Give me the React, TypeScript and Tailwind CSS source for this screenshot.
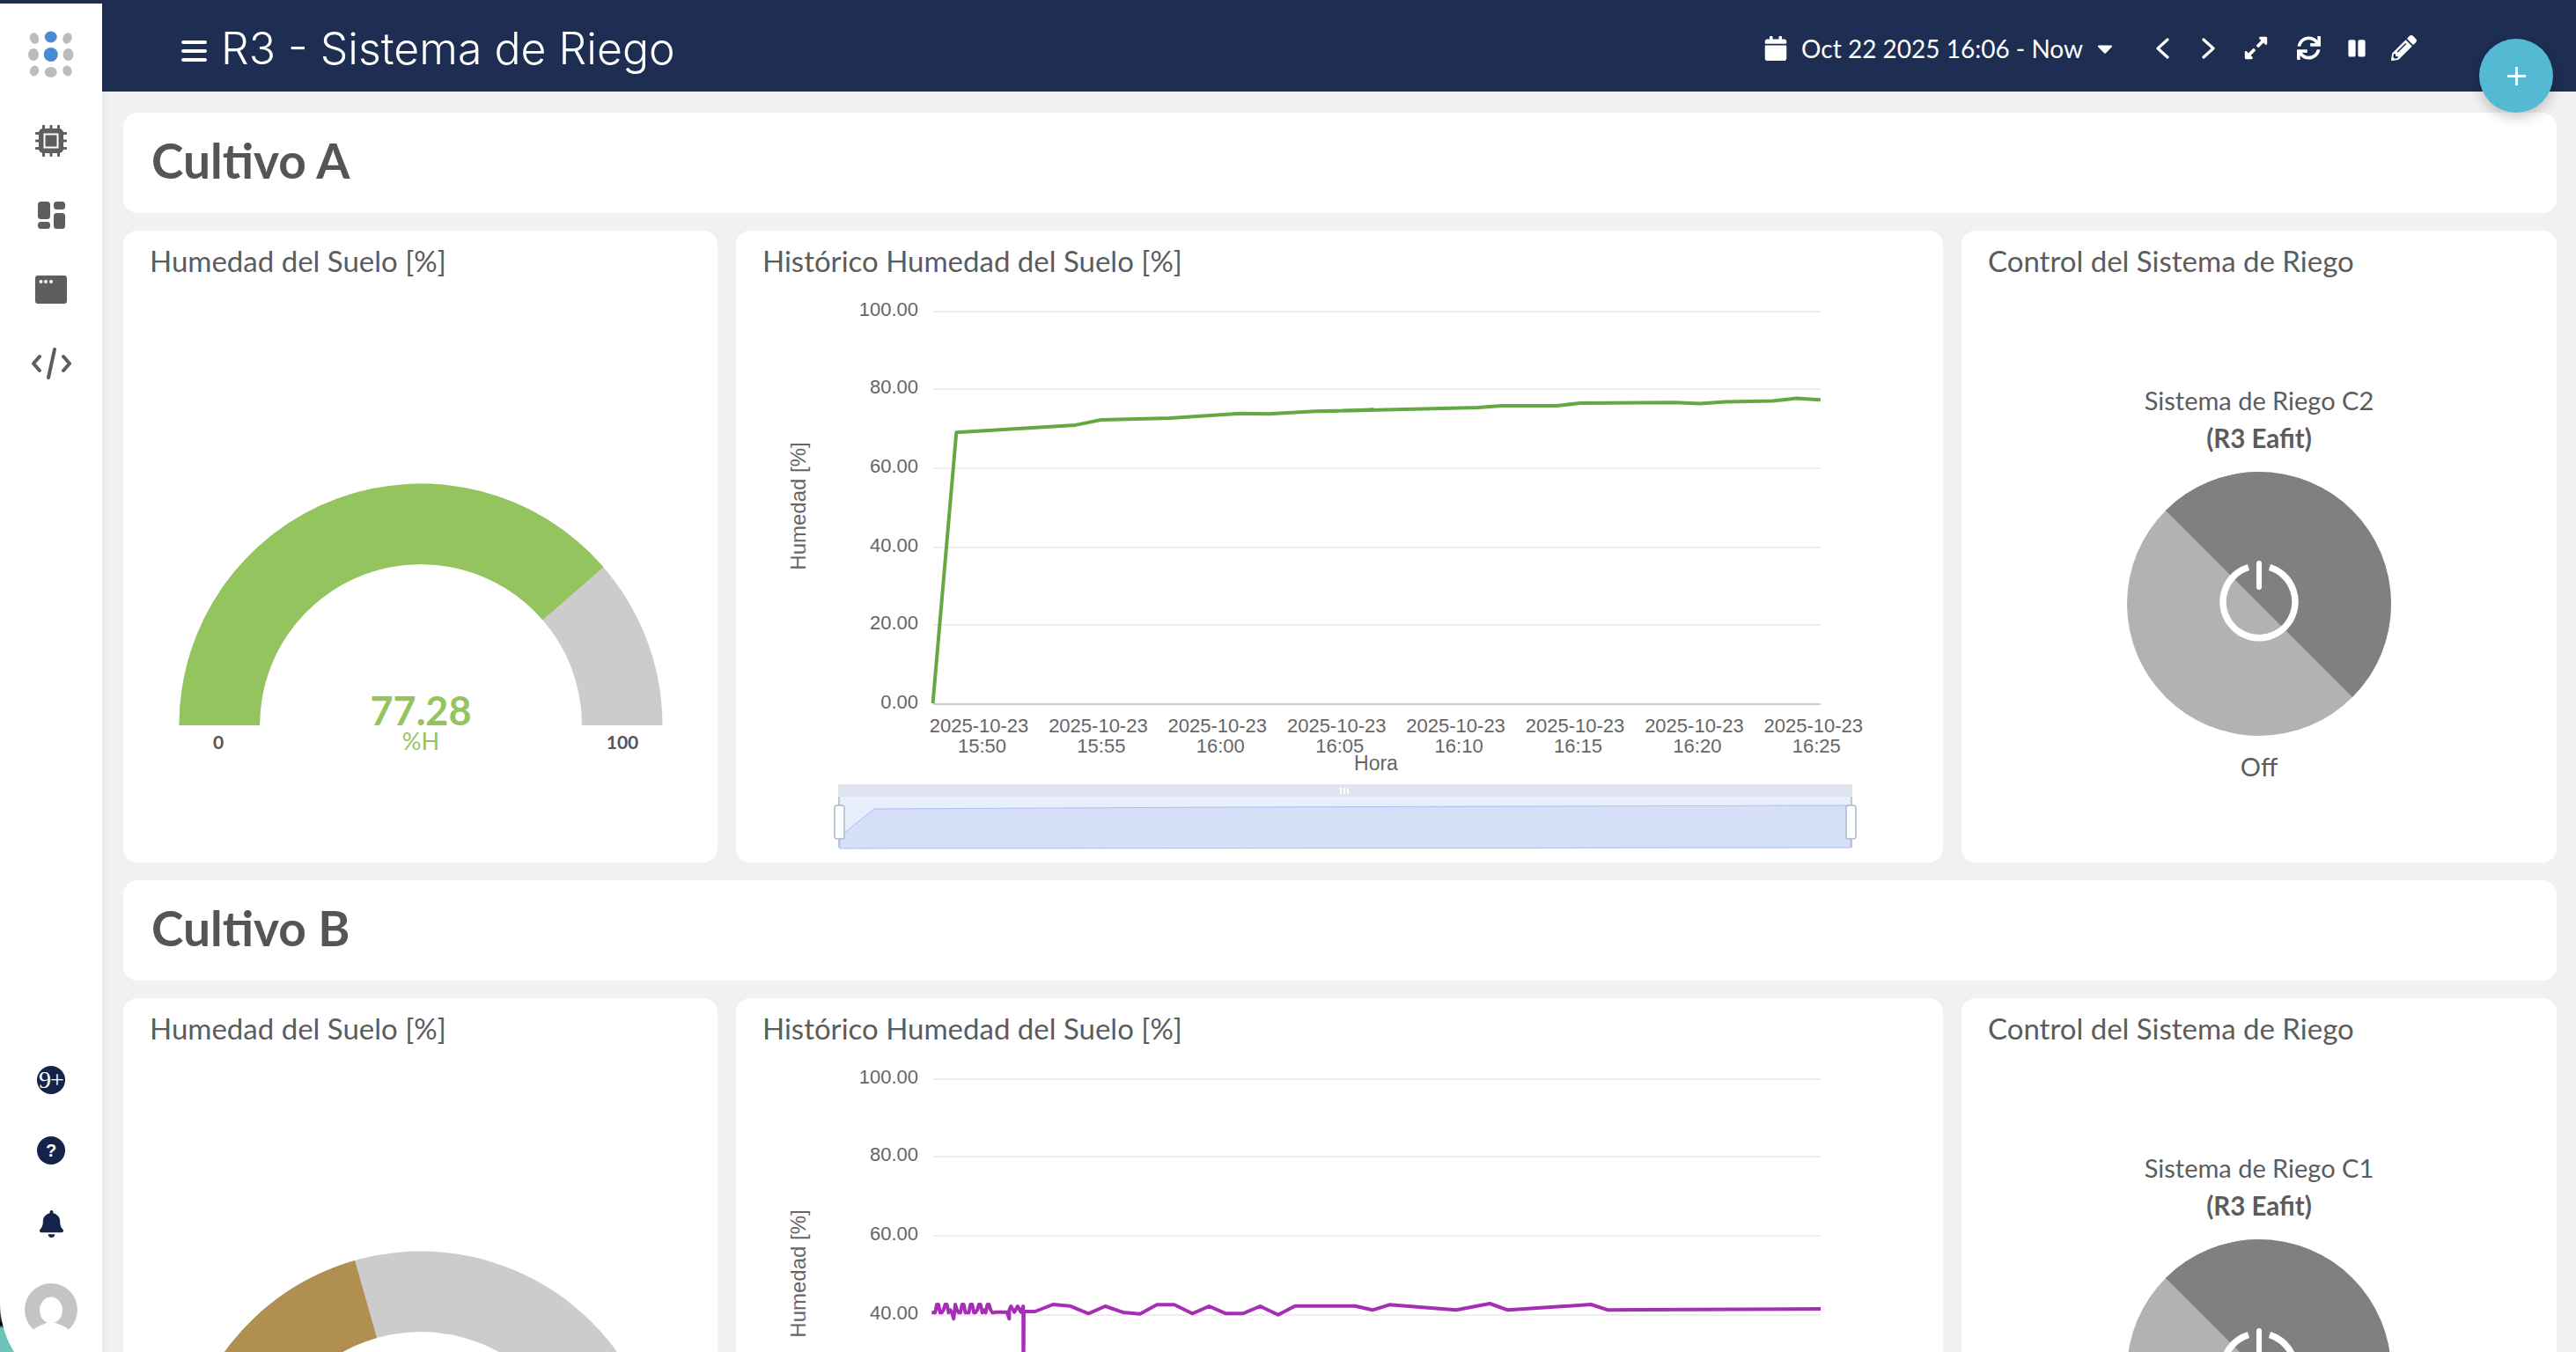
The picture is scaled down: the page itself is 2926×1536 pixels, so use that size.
import React from "react";
import { FaBell, FaCalendar, FaCaretDown, FaExpandAlt, FaPause, FaPencilAlt, FaSync } from "react-icons/fa";

const BODY = "font-['Lato','Noto_Sans',sans-serif]";
const CHART_FONT = "'Liberation Sans', Arial, sans-serif";
const GREEN_LINE: [number, number][] = [
  [447, 1138], [507, 407], [810, 387], [875, 373], [1050, 368], [1230, 356], [1300, 357], [1420, 350], [1568, 346],
];
const GREEN_LINE2: [number, number][] = [
  [0, 350], [400, 340], [460, 335], [600, 335], [660, 328], [900, 326], [965, 329], [1030, 324], [1150, 322], [1210, 315], [1272, 319],
];

const greenPoints = [
  ...GREEN_LINE.map(([x, y]) => `${(x / 2.24 + 860).toFixed(1)},${(y / 2.376 + 320).toFixed(1)}`),
  ...GREEN_LINE2.map(([x, y]) => `${(x / 2.24 + 1500).toFixed(1)},${(y / 2.376 + 320).toFixed(1)}`),
].join(" ");

const PURPLE: [number, number][] = [
  [425, 932], [445, 932], [449, 955], [449, 925], [452, 912], [458, 932], [464, 912], [470, 932], [474, 912], [474, 1400], [475, 930], [495, 930], [527, 906], [557, 911], [590, 937], [620, 912], [652, 933], [682, 938], [712, 907], [743, 907], [775, 937], [805, 912], [835, 937], [865, 937], [896, 912], [928, 941], [958, 911], [1065, 911], [1096, 925], [1126, 907], [1245, 925], [1305, 903], [1337, 925], [1485, 906], [1516, 925], [1568, 924],
];
const noisy: string[] = [];
for (let x = 311; x < 425; x += 3) {
  const v = x === 350 ? 955 : (x * 7) % 5 < 2 ? 906 : (x * 3) % 4 === 0 ? 925 : 934;
  noisy.push(`${(x / 1.568 + 860).toFixed(1)},${(1180 + v / 3 - 872).toFixed(1)}`);
}
const purplePoints = [
  ...noisy,
  ...PURPLE.map(([x, y]) => `${(x / 1.568 + 860).toFixed(1)},${(1180 + y / 3 - 872).toFixed(1)}`),
  "2068,615",
].join(" ");

const TICKS: [string, number][] = [["100.00", 354], ["80.00", 442], ["60.00", 532], ["40.00", 622], ["20.00", 710], ["0.00", 800]];
const TIMES = ["15:50", "15:55", "16:00", "16:05", "16:10", "16:15", "16:20", "16:25"];

function polar(cx: number, cy: number, r: number, frac: number) {
  const a = Math.PI * (1 - frac);
  return [cx + r * Math.cos(a), cy - r * Math.sin(a)];
}

function Gauge({ value, unit, color }: { value: number; unit: string; color: string }) {
  const cx = 478, cy = 824, R = 274.5, r = 183;
  const [ox, oy] = polar(cx, cy, R, value / 100);
  const [ix, iy] = polar(cx, cy, r, value / 100);
  return (
    <svg viewBox="140 332 675 648" className="block w-full h-[648px]">
      <path d={`M${cx - R} ${cy} A${R} ${R} 0 0 1 ${cx + R} ${cy} L${cx + r} ${cy} A${r} ${r} 0 0 0 ${cx - r} ${cy} Z`} fill="#cccccc" />
      <path d={`M${cx - R} ${cy} A${R} ${R} 0 0 1 ${ox} ${oy} L${ix} ${iy} A${r} ${r} 0 0 0 ${cx - r} ${cy} Z`} fill={color} />
      <text x="478" y="824" textAnchor="middle" fontSize="45" fontWeight="700" fill={color} fontFamily="Lato, sans-serif">{value.toFixed(2)}</text>
      <text x="478" y="852" textAnchor="middle" fontSize="27" fontWeight="400" fill={color} fontFamily="Lato, sans-serif">{unit}</text>
      <text x="248" y="851" textAnchor="middle" fontSize="21" fontWeight="700" fill="#555555" fontFamily="Lato, sans-serif">0</text>
      <text x="707" y="851" textAnchor="middle" fontSize="21" fontWeight="700" fill="#555555" fontFamily="Lato, sans-serif">100</text>
    </svg>
  );
}

function Chart({ points, color }: { points: string; color: string }) {
  return (
    <svg viewBox="836 332 1371 648" className="block w-full h-[648px]" fontFamily={CHART_FONT} fontSize="22" fill="#666666">
      {TICKS.map(([label, y]) => (
        <g key={label}>
          <line x1="1060" x2="2068" y1={y} y2={y} stroke={y === 800 ? "#cccccc" : "#eeeeee"} strokeWidth="2" />
          <text x="1043" y={y + 5} textAnchor="end">{label}</text>
        </g>
      ))}
      <polyline points={points} fill="none" stroke={color} strokeWidth="4" strokeLinejoin="round" />
      {TIMES.map((t, i) => (
        <g key={t}>
          <text x={1112 + i * 135.4} y="832" textAnchor="middle">2025-10-23</text>
          <text x={1115.5 + i * 135.4} y="855" textAnchor="middle">{t}</text>
        </g>
      ))}
      <text x="1563" y="875" textAnchor="middle" fontSize="23">Hora</text>
      <text transform="translate(915 575) rotate(-90)" textAnchor="middle" fontSize="24">Humedad [%]</text>
      <rect x="952" y="891" width="1152" height="14" rx="2" fill="#dfe4ef" />
      <rect x="954" y="905" width="1148" height="58" fill="#e9eefc" />
      <path d="M954 964 L954 950 L993 919 L1400 917 L2102 915 L2102 963 Z" fill="#d5dff8" stroke="#a9bff3" strokeWidth="1" />
      <line x1="953" x2="953" y1="905" y2="963" stroke="#bcc5da" strokeWidth="2" />
      <line x1="2103" x2="2103" y1="905" y2="963" stroke="#bcc5da" strokeWidth="2" />
      <rect x="948" y="915" width="11" height="38" rx="3" fill="#ffffff" stroke="#acb8d1" strokeWidth="1.5" />
      <rect x="2097" y="915" width="11" height="38" rx="3" fill="#ffffff" stroke="#acb8d1" strokeWidth="1.5" />
      <rect x="1522" y="895" width="2" height="7" fill="#ffffff" />
      <rect x="1526" y="895" width="2" height="7" fill="#ffffff" />
      <rect x="1530" y="895" width="2" height="7" fill="#ffffff" />
    </svg>
  );
}

function Switch({ name }: { name: string }) {
  return (
    <svg viewBox="2228 332 676 648" className="block w-full h-[648px]" fontFamily="Lato, sans-serif" fill="#5c5c5c">
      <text x="2566" y="466" textAnchor="middle" fontSize="29" fontWeight="400">{name}</text>
      <text x="2566" y="509" textAnchor="middle" fontSize="29.5" fontWeight="700">(R3 Eafit)</text>
      <circle cx="2566" cy="686" r="150" fill="#b2b2b2" />
      <path d="M2459.93 579.93 A150 150 0 0 1 2672.07 792.07 Z" fill="#808080" />
      <path d="M2554 644.5 A41 41 0 1 0 2578 644.5" fill="none" stroke="#ffffff" strokeWidth="7.5" />
      <line x1="2566" x2="2566" y1="640" y2="667" stroke="#ffffff" strokeWidth="6" strokeLinecap="round" />
      <text x="2566" y="882" textAnchor="middle" fontSize="29" fontWeight="400">Off</text>
    </svg>
  );
}

function Card({ title, children }: { title: string; children: React.ReactNode }) {
  return (
    <div className="bg-white rounded-[16px] h-[718px] overflow-hidden">
      <div className="h-[70px] pl-[30px] pt-[13px] text-[33px] leading-[42px] text-[#5c5c5c]">{title}</div>
      {children}
    </div>
  );
}

function Section({ name, value, gaugeColor, points, lineColor, sw }: { name: string; value: number; gaugeColor: string; points: string; lineColor: string; sw: string }) {
  return (
    <>
      <div className="bg-white rounded-[16px] h-[114px] flex items-center pl-[32px] pb-[6px] shrink-0">
        <h2 className="text-[55px] font-bold text-[#555555] leading-none">{name}</h2>
      </div>
      <div className="grid grid-cols-[675px_1371px_676px] gap-x-[21px] shrink-0">
        <Card title="Humedad del Suelo [%]"><Gauge value={value} unit="%H" color={gaugeColor} /></Card>
        <Card title="Histórico Humedad del Suelo [%]"><Chart points={points} color={lineColor} /></Card>
        <Card title="Control del Sistema de Riego"><Switch name={sw} /></Card>
      </div>
    </>
  );
}

function Logo() {
  return (
    <svg viewBox="0 0 116 104" className="block w-[116px] h-[104px]">
      <ellipse cx="39" cy="43.5" rx="5" ry="6.5" fill="#bcbcbc" transform="rotate(-20 39 43.5)" />
      <ellipse cx="57.7" cy="42" rx="7" ry="6.5" fill="#4a8bd0" />
      <ellipse cx="76.5" cy="43.5" rx="5" ry="6.5" fill="#bcbcbc" transform="rotate(20 76.5 43.5)" />
      <ellipse cx="38" cy="62" rx="6" ry="7" fill="#bcbcbc" />
      <ellipse cx="57.7" cy="62" rx="8" ry="8" fill="#4a8bd0" />
      <ellipse cx="77.5" cy="62" rx="6" ry="7" fill="#bcbcbc" />
      <ellipse cx="39" cy="80.5" rx="5" ry="6" fill="#bcbcbc" transform="rotate(20 39 80.5)" />
      <ellipse cx="57.7" cy="82" rx="7" ry="6" fill="#bcbcbc" />
      <ellipse cx="76.5" cy="80.5" rx="5" ry="6" fill="#bcbcbc" transform="rotate(-20 76.5 80.5)" />
    </svg>
  );
}

function ChipIcon() {
  return (
    <svg viewBox="0 0 36 36" className="block w-[36px] h-[36px]" fill="#5e5e5e">
      {[8, 16.5, 25].map((v) => (
        <g key={v}>
          <rect x={v} y="0" width="3" height="36" rx="1" />
          <rect x="0" y={v} width="36" height="3" rx="1" />
        </g>
      ))}
      <rect x="4" y="4" width="28" height="28" rx="5" />
      <rect x="9.5" y="9.5" width="17" height="17" fill="#ffffff" />
      <rect x="11.5" y="11.5" width="13" height="13" fill="#5e5e5e" />
    </svg>
  );
}

function DashIcon() {
  return (
    <svg viewBox="0 0 31 31" className="block w-[31px] h-[31px]" fill="#5e5e5e">
      <rect x="0" y="0" width="14" height="20" rx="3.5" />
      <rect x="0" y="23" width="14" height="8" rx="3.5" />
      <rect x="18" y="0" width="13" height="9" rx="3.5" />
      <rect x="18" y="13" width="13" height="18" rx="3.5" />
    </svg>
  );
}

function WindowIcon() {
  return (
    <svg viewBox="0 0 36 32" className="block w-[36px] h-[32px]">
      <rect width="36" height="32" rx="3" fill="#5e5e5e" />
      <circle cx="6.5" cy="7" r="2" fill="#ffffff" />
      <circle cx="12" cy="7" r="2" fill="#ffffff" />
      <circle cx="18" cy="7" r="2" fill="#ffffff" />
    </svg>
  );
}

function CodeIcon() {
  return (
    <svg viewBox="0 0 45 36" className="block w-[45px] h-[36px]" fill="none" stroke="#5e5e5e" strokeWidth="4" strokeLinecap="round" strokeLinejoin="round">
      <path d="M9 10 L2 18 L9 26" />
      <path d="M36 10 L43 18 L36 26" />
      <path d="M26 2 L19 34" />
    </svg>
  );
}

function Chevron({ dir, className }: { dir: "left" | "right"; className: string }) {
  return (
    <svg viewBox="0 0 16 24" className={`block w-[16px] h-[24px] ${className}`} fill="none" stroke="#ffffff" strokeWidth="3.2" strokeLinecap="round" strokeLinejoin="round">
      <path d={dir === "left" ? "M14 2 L3 12 L14 22" : "M2 2 L13 12 L2 22"} />
    </svg>
  );
}

function Sidebar() {
  return (
    <div className="w-[116px] shrink-0 flex flex-col bg-[linear-gradient(to_bottom,#ffffff_1470px,#000000_1505px,#6bc5b8_1509px)]">
      <div className="h-[4px] bg-[#1e2d52] shrink-0" />
      <aside className="flex-1 -mb-[50px] pb-[50px] bg-white rounded-bl-[106px] shadow-[2px_0_10px_rgba(0,0,0,0.05)] relative z-10 flex flex-col items-center overflow-hidden">
        <div className="-mt-[4px]"><Logo /></div>
        <div className="mt-[38px]"><ChipIcon /></div>
        <div className="mt-[51px]"><DashIcon /></div>
        <div className="mt-[53px]"><WindowIcon /></div>
        <div className="mt-[50px]"><CodeIcon /></div>
        <div className="mt-auto flex flex-col items-center">
          <div className="w-[32px] h-[32px] rounded-full bg-[#15224a] text-white flex items-center justify-center font-['Liberation_Serif',serif] text-[28px] leading-none tracking-[-1px]">9+</div>
          <div className="mt-[48px] w-[32px] h-[32px] rounded-full bg-[#15224a] text-white flex items-center justify-center font-['Liberation_Sans',sans-serif] font-bold text-[20px] leading-none">?</div>
          <FaBell className="mt-[52px] text-[#15224a]" size={31} />
          <svg viewBox="0 0 60 60" className="mt-[52px] mb-[18px] block w-[60px] h-[60px]">
            <circle cx="30" cy="30" r="30" fill="#c4c4c4" />
            <ellipse cx="30" cy="30.5" rx="13" ry="15" fill="#ffffff" />
            <path d="M10 52.5 Q18 46 30 44 Q42 46 50 52.5 L60 60 L0 60 Z" fill="#ffffff" />
          </svg>
        </div>
      </aside>
    </div>
  );
}

function Header() {
  return (
    <header className="h-[104px] bg-[#1e2d52] text-white flex items-center pl-[90px] shrink-0">
      <div className="flex flex-col gap-[6px] w-[29px] mt-[12px]">
        <span className="block h-[4px] bg-white rounded" />
        <span className="block h-[4px] bg-white rounded" />
        <span className="block h-[4px] bg-white rounded" />
      </div>
      <h1 className="ml-[16px] mt-[6px] text-[50px] font-light leading-none font-['Inter',sans-serif]">R3 - Sistema de Riego</h1>
      <div className="ml-auto flex items-center pr-[181px] mt-[5px]">
        <FaCalendar size={28} />
        <span className="ml-[15px] text-[28px] leading-none">Oct 22 2025 16:06 - Now</span>
        <FaCaretDown size={28} className="ml-[11px]" />
        <Chevron dir="left" className="ml-[43px]" />
        <Chevron dir="right" className="ml-[37px]" />
        <FaExpandAlt size={29} className="ml-[31px]" />
        <FaSync size={27} className="ml-[32px]" />
        <FaPause size={22} className="ml-[30px]" />
        <FaPencilAlt size={29} className="ml-[28px]" />
      </div>
    </header>
  );
}

export default function App() {
  return (
    <div className={`relative w-[2926px] h-[1536px] overflow-hidden flex bg-[#f1f1f1] ${BODY}`}>
      <Sidebar />
      <div className="flex-1 min-w-0 flex flex-col">
        <Header />
        <main className="flex-1 min-h-0 flex flex-col gap-[20px] pl-[24px] pr-[22px] pt-[24px] overflow-hidden">
          <Section name="Cultivo A" value={77.28} gaugeColor="#94c45e" points={greenPoints} lineColor="#64a844" sw="Sistema de Riego C2" />
          <Section name="Cultivo B" value={41.2} gaugeColor="#b18f51" points={purplePoints} lineColor="#a52eb5" sw="Sistema de Riego C1" />
        </main>
      </div>
      <button className="absolute left-[2816px] top-[44px] w-[84px] h-[84px] rounded-full bg-[#54b9d2] text-white flex items-center justify-center shadow-[0_6px_14px_rgba(0,0,0,0.2)]">
        <svg viewBox="0 0 21 21" className="block w-[21px] h-[21px]"><path d="M10.5 0v21M0 10.5h21" stroke="#ffffff" strokeWidth="3" /></svg>
      </button>
    </div>
  );
}
